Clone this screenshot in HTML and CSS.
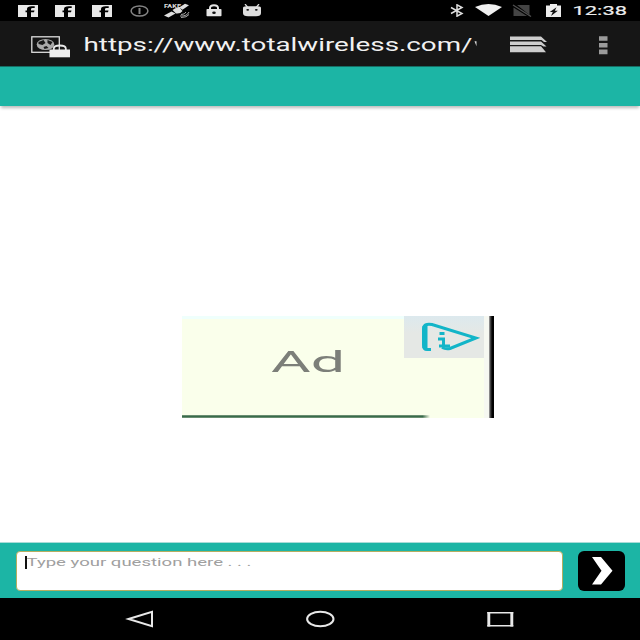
FILE: index.html
```
<!DOCTYPE html>
<html lang="en">
<head>
<meta charset="utf-8">
<title>Total Wireless chat</title>
<link rel="stylesheet" href="styles.css">
</head>
<body>
<div class="phone">
  <header class="status">
    <div class="notifications">
      <svg class="fb" viewBox="0 0 20 12"><path fill="#e8e8e8" d="M0 0h20v12h-7V7.300h3L16.500 5.500H13V4.300q0-1.200 1.500-1.200h2.200V1.200h-3Q9 1.200 9 4v1.500H7.500v1.800H9V12H0z"/></svg>
      <svg class="fb" viewBox="0 0 20 12"><path fill="#e8e8e8" d="M0 0h20v12h-7V7.300h3L16.500 5.500H13V4.300q0-1.200 1.500-1.200h2.200V1.200h-3Q9 1.200 9 4v1.500H7.500v1.800H9V12H0z"/></svg>
      <svg class="fb" viewBox="0 0 20 12"><path fill="#e8e8e8" d="M0 0h20v12h-7V7.300h3L16.500 5.500H13V4.300q0-1.200 1.500-1.200h2.200V1.200h-3Q9 1.200 9 4v1.500H7.500v1.800H9V12H0z"/></svg>
      <svg class="info" viewBox="0 0 19 12"><ellipse cx="9.500" cy="6" rx="8.400" ry="5" fill="none" stroke="#858585" stroke-width="1.500"/><path d="M8.500 3h2v6h-2z" fill="#858585"/></svg>
      <svg class="sat" viewBox="0 0 27 16"><g fill="#dedede"><path d="M15 4.500L21 .8l4 1.500-6.500 4.500zM0 12.500L7.500 8.500l4 2L4.500 14.500z"/><path d="M8.500 7q3-3 7-2.500L18.500 8q-2 3-6.500 2.500z"/></g><path d="M17 11.500q4 0 5-2.500M16 13q7 .5 9-4M17 14.500q6 0 8-3" fill="none" stroke="#bbb" stroke-width=".9"/><text x="0" y="5" class="fake" textLength="17" lengthAdjust="spacingAndGlyphs">FAKE</text></svg>
      <svg class="lock" viewBox="0 0 16 13"><path d="M4 6V4Q4 1.200 8 1.200t4 2.800v2" fill="none" stroke="#e4e4e4" stroke-width="2"/><rect x=".5" y="5" width="15" height="7.300" rx=".8" fill="#e4e4e4"/><ellipse cx="8" cy="8.700" rx="1.800" ry="1.300" fill="#111"/></svg>
      <svg class="droid" viewBox="0 0 18 13"><path d="M2 0l2.500 3M16 0l-2.500 3" stroke="#ddd" stroke-width="1.200"/><path d="M0 4q0-1.700 3-1.700h12q3 0 3 1.700v5q0 3.300-5 3.300H5Q0 12.300 0 9z" fill="#dedede"/><ellipse cx="4.700" cy="5.800" rx="1.400" ry=".9" fill="#111"/><ellipse cx="13.300" cy="5.800" rx="1.400" ry=".9" fill="#111"/></svg>
    </div>
    <div class="system">
      <svg class="bt" viewBox="0 0 14 13"><path d="M1 3.500l11 6-5 2.700V.8l5 2.700-11 6" fill="none" stroke="#ddd" stroke-width="1.500"/></svg>
      <svg class="wifi" viewBox="0 0 27 12"><path d="M0 3Q13.500-3 27 3L13.500 12z" fill="#f0f0f0"/></svg>
      <svg class="nosim" viewBox="0 0 20 13"><path d="M5 1h12.500v10z" fill="#444"/><path d="M1.500 3.500L15 12H1.500z" fill="#444"/><path d="M1 1l18 11.500" stroke="#505050" stroke-width="1.300"/></svg>
      <svg class="battery" viewBox="0 0 15 14"><path d="M0 1.500h4V0h7v1.500h4v11.500H0z" fill="#ececec"/><path d="M10.500 3.200L3.800 7.900h3L5 12l6.800-5.200h-3z" fill="#111"/></svg>
      <svg class="clock" viewBox="0 0 56 17"><text x=".5" y="13.300" textLength="54.500" lengthAdjust="spacingAndGlyphs">12:38</text></svg>
    </div>
  </header>

  <div class="browser">
    <svg class="site" viewBox="0 0 40 23"><rect x=".8" y=".8" width="27.500" height="15.500" fill="#141414" stroke="#ddd" stroke-width="1.300"/><ellipse cx="14.500" cy="8.500" rx="8.800" ry="5.500" fill="#a9a9a9"/><path d="M7.500 6l5-2 2 3-3 2-4-1zM12.500 11l3-1 2 2-4 1zM16.500 4l5 2-2 3-3-2z" fill="#171717"/><path d="M22.800 15v-2.500q0-3 6-3t6 3V15" fill="none" stroke="#e9e9e9" stroke-width="1.800"/><rect x="18.500" y="13.500" width="20.500" height="7.800" fill="#efefef"/></svg>
    <svg class="url" viewBox="0 0 393 24"><text x="-.500" y="17.500" textLength="389" lengthAdjust="spacingAndGlyphs">https://www.totalwireless.com/</text><path d="M390.500 8.300h2v5z" fill="#ddd"/></svg>
    <svg class="tabs" viewBox="0 0 38 18"><path d="M0 .5h31l6 5.500h-3l-2.500-2H0zM0 5.500h31l5.500 5h-3L31 9H0zM0 10.200h31l5 6H0z" fill="#cdcdcd"/></svg>
    <svg class="more" viewBox="0 0 9 19"><path d="M0 .3h8.500v4.500H0zM0 7h8.500v4.500H0zM0 13.500h8.500v4.700H0z" fill="#9b9b9b"/></svg>
  </div>

  <div class="banner"></div>

  <main class="page">
    <div class="ad">
      <svg class="adtext" viewBox="0 0 76 36"><text x="0" y="29" textLength="74" lengthAdjust="spacingAndGlyphs">Ad</text></svg>
      <div class="choice"><svg class="choiceicon" viewBox="0 0 62 32"><path d="M13 28.500H9Q5.500 28.500 5.500 24V8Q5.500 2 14 3.500L58 17 32 27.500q-4 1-8-1" fill="none" stroke="#12b5c8" stroke-width="3"/><path d="M7 5v22" stroke="#12b5c8" stroke-width="5"/><path d="M21.500 12.500h5M20 18h5.500v6M21 25h11" fill="none" stroke="#12b5c8" stroke-width="3"/></svg></div>
      <div class="margin"></div>
      <div class="edge"></div>
      <div class="rule"></div>
    </div>
  </main>

  <footer class="composer">
    <div class="field">
      <span class="caret"></span>
      <svg class="hint" viewBox="0 0 230 16"><text x="-.500" y="10.300" textLength="225" lengthAdjust="spacingAndGlyphs">Type your question here . . .</text></svg>
    </div>
    <div class="send"><svg viewBox="0 0 22 28"><path d="M0 0h9l11.500 13.700L9 27.500H0l9.500-13.800z" fill="#fff"/></svg></div>
  </footer>

  <nav class="nav">
    <svg class="navicon" viewBox="0 0 30 18"><path d="M3.500 9L27 1.800v14.400z" fill="none" stroke="#e8e8e8" stroke-width="2"/></svg>
    <svg class="navicon" viewBox="0 0 30 18"><ellipse cx="15.300" cy="9" rx="13.200" ry="7.300" fill="none" stroke="#e8e8e8" stroke-width="2"/></svg>
    <svg class="navicon" viewBox="0 0 30 18"><path d="M2.300 2.700h26M2.300 15.700h26" stroke="#e8e8e8" stroke-width="1.500"/><path d="M3.800 2v14.400M26.800 2v14.400" stroke="#e8e8e8" stroke-width="2.900"/></svg>
  </nav>
</div>
</body>
</html>
```
FILE: styles.css
```
* { box-sizing: border-box; }
body { margin: 0; background: #fff; font-family: Roboto, "Liberation Sans", sans-serif; }
svg { display: block; flex: none; }
.phone { width: 640px; height: 640px; display: flex; flex-direction: column; overflow: hidden; }

.status { height: 21px; flex: none; background: #000; display: flex; justify-content: space-between; }
.notifications, .system { display: flex; align-items: flex-start; }
.notifications { padding-left: 18px; }
.fb { width: 20px; height: 12px; margin: 4.500px 17.200px 0 0; }
.info { width: 19px; height: 12px; margin-top: 4.500px; }
.sat { width: 27px; height: 16px; margin: 3px 0 0 15px; }
.fake { font-size: 5px; font-weight: 700; fill: #ddd; }
.lock { width: 16px; height: 13px; margin: 4px 0 0 15px; }
.droid { width: 18px; height: 13px; margin: 3.500px 0 0 21px; }
.bt { width: 14px; height: 13px; margin-top: 4px; }
.wifi { width: 27px; height: 12px; margin: 4px 0 0 11px; }
.nosim { width: 20px; height: 13px; margin: 4px 0 0 10px; }
.battery { width: 15px; height: 14px; margin: 3.500px 0 0 14px; }
.clock { width: 56px; height: 17px; margin: 2px 12px 0 11px; font-size: 13.500px; fill: #ededed; stroke: #ededed; stroke-width: .2px; }

.browser { height: 45px; flex: none; background: #161616; display: flex; align-items: flex-start; padding-left: 31px; }
.site { width: 40px; height: 23px; margin-top: 15px; }
.url { width: 393px; height: 24px; margin: 12px 0 0 13px; font-size: 17.500px; fill: #f1f1f1; }
.tabs { width: 38px; height: 18px; margin: 15px 0 0 33px; }
.more { width: 9px; height: 19px; margin: 14.500px 0 0 51px; }

.banner { height: 40px; flex: none; background: #1cb5a5; border-top: 1px solid #176e65; box-shadow: 0 3px 3px -1px #bbb; }
.page { flex: 1; padding: 210px 0 0 182px; }
.ad { width: 312px; height: 102px; display: grid; grid-template-columns: 222px 80px 5px 5px; grid-template-rows: 42px 57px 3px; background: #faffeb; box-shadow: inset 0 3px #effffc; }
.adtext { grid-column: 1; grid-row: 1 / 3; width: 76px; height: 36px; margin: 27px 0 0 89px; font-size: 30px; fill: #7c7f79; filter: blur(.7px); }
.choice { grid-column: 2; grid-row: 1; background: linear-gradient(#dce9ee, #e5e8e5 40%); padding: 5px 0 0 14px; }
.choiceicon { width: 62px; height: 32px; filter: blur(.6px); }
.margin { grid-column: 3; grid-row: 1 / 4; background: #f6f8f1; }
.edge { grid-column: 4; grid-row: 1 / 4; background: linear-gradient(90deg, #aaa, #333 35%, #000 65%); }
.rule { grid-column: 1 / 3; grid-row: 3; width: 248px; height: 3px; background: linear-gradient(90deg, transparent 97%, #faffeb), linear-gradient(#829f82, #386b4c 50%, #829f82); }

.composer { height: 56px; flex: none; display: flex; align-items: flex-start; padding: 8px 0 0 16px; background: #1cb5a5; border-top: 1px solid #a9dcd8; }
.field { width: 547px; height: 40px; display: flex; align-items: flex-start; padding: 4px 0 0 8px; border: 1px solid #b5ae61; border-radius: 4px; background: #fff; }
.caret { width: 2px; height: 13px; background: #111; }
.hint { width: 230px; height: 16px; font-size: 11.500px; fill: #a0a0a0; }
.send { width: 47px; height: 40px; margin-left: 15.400px; border-radius: 6px; background: #000; padding: 6px 0 0 14px; }
.send svg { width: 22px; height: 28px; }

.nav { height: 42px; flex: none; display: flex; justify-content: center; gap: 150px; padding-top: 12px; background: #000; }
.navicon { width: 30px; height: 18px; }
```
